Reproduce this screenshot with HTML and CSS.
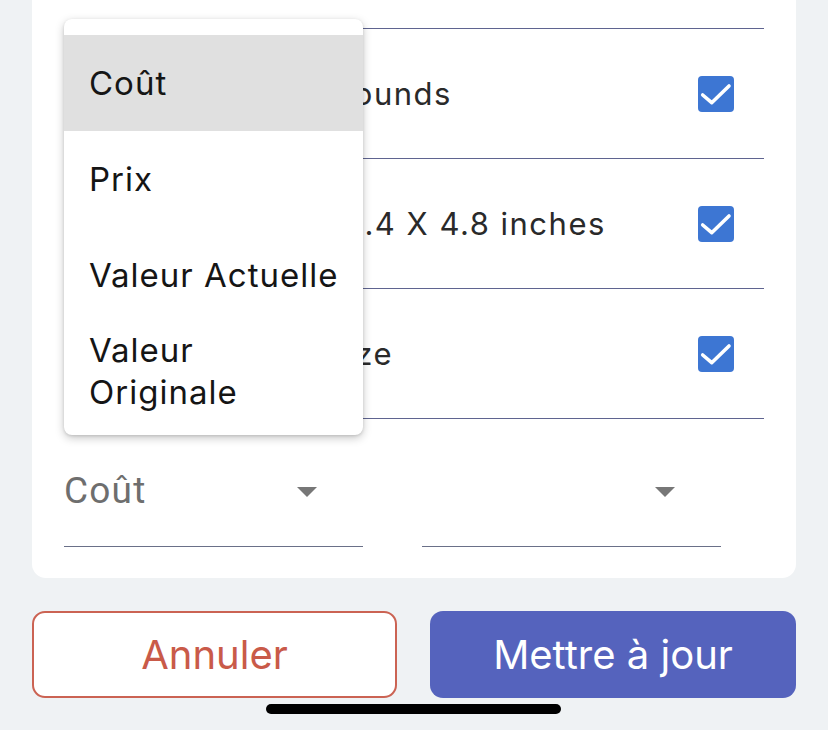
FILE: index.html
```html
<!DOCTYPE html>
<html lang="fr">
<head>
<meta charset="utf-8">
<link rel="stylesheet" href="styles.css">
</head>
<body>
<div class="screen">
  <div class="card">
    <div class="row">
      <span class="row-text">Net weight: 1.25 pounds</span>
      <span class="check"><svg viewBox="0 0 36 36" width="36" height="36"><path d="M4.7 19 L13.7 26.7 L31 10" fill="none" stroke="#fff" stroke-width="3.6" stroke-linecap="round" stroke-linejoin="round"/></svg></span>
    </div>
    <div class="row">
      <span class="row-text">Item Dimensions: 1.4 X 4.8 inches</span>
      <span class="check"><svg viewBox="0 0 36 36" width="36" height="36"><path d="M4.7 19 L13.7 26.7 L31 10" fill="none" stroke="#fff" stroke-width="3.6" stroke-linecap="round" stroke-linejoin="round"/></svg></span>
    </div>
    <div class="row row-last">
      <span class="row-text">Format: Regular size</span>
      <span class="check"><svg viewBox="0 0 36 36" width="36" height="36"><path d="M4.7 19 L13.7 26.7 L31 10" fill="none" stroke="#fff" stroke-width="3.6" stroke-linecap="round" stroke-linejoin="round"/></svg></span>
    </div>
    <div class="selects">
      <div class="select">
        <span class="select-value">Coût</span>
        <span class="arrow"></span>
      </div>
      <div class="select">
        <span class="select-value"></span>
        <span class="arrow"></span>
      </div>
    </div>

    <ul class="menu">
      <li class="menu-item active">Coût</li>
      <li class="menu-item">Prix</li>
      <li class="menu-item">Valeur Actuelle</li>
      <li class="menu-item">Valeur Originale</li>
    </ul>
  </div>

  <div class="actions">
    <button class="btn btn-cancel">Annuler</button>
    <button class="btn btn-primary">Mettre à jour</button>
  </div>

  <div class="home-indicator"></div>
</div>
</body>
</html>
```

FILE: styles.css
```css
* { box-sizing: border-box; }
html, body {
  margin: 0;
  padding: 0;
  background: #eff2f4;
}
body {
  font-family: "Inter", "Liberation Sans", sans-serif;
  width: 828px;
  height: 730px;
  overflow: hidden;
}
.screen {
  position: relative;
  width: 828px;
  height: 730px;
  padding: 0 32px;
}
.card {
  position: relative;
  background: #ffffff;
  border-radius: 0 0 14px 14px;
  padding: 28px 32px 31px 32px;
}
.row {
  display: flex;
  align-items: center;
  justify-content: space-between;
  height: 130px;
  border-top: 1px solid #5f6490;
  padding-right: 30px;
}
.row-last {
  height: 131px;
  border-bottom: 1px solid #5f6490;
}
.row-text {
  font-size: 31px;
  letter-spacing: 1.5px;
  color: #2a2a2a;
  white-space: nowrap;
}
.check {
  width: 36px;
  height: 36px;
  border-radius: 4px;
  background: #3d76d3;
  display: flex;
}
.selects {
  display: flex;
  gap: 59px;
  padding-top: 40px;
}
.select {
  width: 299px;
  height: 88px;
  border-bottom: 1px solid #6a7088;
  display: flex;
  align-items: flex-start;
  justify-content: space-between;
  padding: 10px 46px 0 0;
}
.select-value {
  font-family: "Roboto", "Liberation Sans", sans-serif;
  font-size: 37px;
  letter-spacing: 1.2px;
  line-height: 44px;
  color: #6e6e6e;
}
.arrow {
  margin-top: 18px;
  width: 0;
  height: 0;
  border-left: 10px solid transparent;
  border-right: 10px solid transparent;
  border-top: 10px solid #777777;
}
.menu {
  position: absolute;
  left: 32px;
  top: 19px;
  width: 299px;
  margin: 0;
  padding: 16px 0;
  list-style: none;
  background: #ffffff;
  border-radius: 8px;
  box-shadow: 0 3px 10px rgba(0, 0, 0, 0.22), 0 1px 3px rgba(0, 0, 0, 0.12);
}
.menu-item {
  min-height: 96px;
  display: flex;
  align-items: center;
  padding: 0 18px 0 25px;
  font-size: 33px;
  letter-spacing: 1px;
  line-height: 42px;
  color: #151515;
}
.menu-item.active {
  background: #e0e0e0;
}
.actions {
  display: flex;
  gap: 33px;
  margin-top: 33px;
}
.btn {
  height: 87px;
  border-radius: 13px;
  font-family: "Inter", "Liberation Sans", sans-serif;
  font-size: 40px;
  font-weight: 400;
  cursor: pointer;
}
.btn-cancel {
  width: 365px;
  background: #ffffff;
  border: 2px solid #cb6353;
  color: #c95a49;
}
.btn-primary {
  width: 366px;
  background: #5563bd;
  border: none;
  color: #ffffff;
}
.home-indicator {
  position: absolute;
  left: 266px;
  top: 704px;
  width: 295px;
  height: 10px;
  border-radius: 5px;
  background: #000000;
}
```
